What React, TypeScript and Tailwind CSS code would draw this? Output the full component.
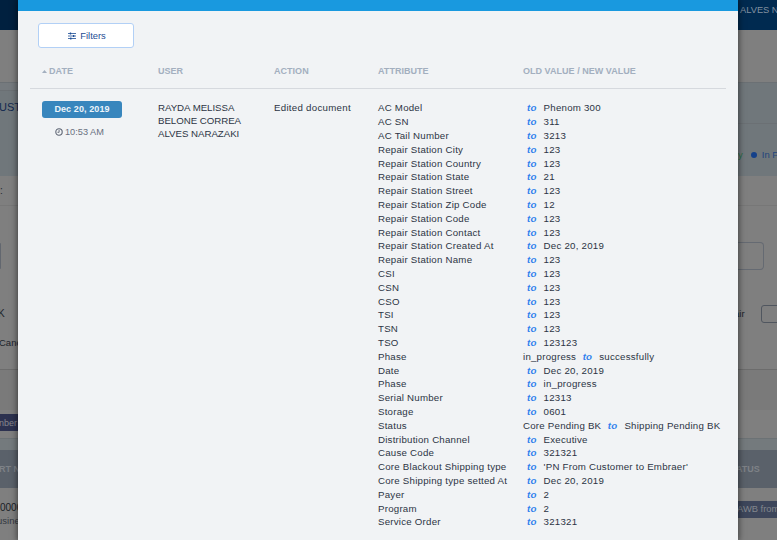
import React from "react";

const changes: [string, string, string][] = [
  ["AC Model", "", "Phenom 300"],
  ["AC SN", "", "311"],
  ["AC Tail Number", "", "3213"],
  ["Repair Station City", "", "123"],
  ["Repair Station Country", "", "123"],
  ["Repair Station State", "", "21"],
  ["Repair Station Street", "", "123"],
  ["Repair Station Zip Code", "", "12"],
  ["Repair Station Code", "", "123"],
  ["Repair Station Contact", "", "123"],
  ["Repair Station Created At", "", "Dec 20, 2019"],
  ["Repair Station Name", "", "123"],
  ["CSI", "", "123"],
  ["CSN", "", "123"],
  ["CSO", "", "123"],
  ["TSI", "", "123"],
  ["TSN", "", "123"],
  ["TSO", "", "123123"],
  ["Phase", "in_progress", "successfully"],
  ["Date", "", "Dec 20, 2019"],
  ["Phase", "", "in_progress"],
  ["Serial Number", "", "12313"],
  ["Storage", "", "0601"],
  ["Status", "Core Pending BK", "Shipping Pending BK"],
  ["Distribution Channel", "", "Executive"],
  ["Cause Code", "", "321321"],
  ["Core Blackout Shipping type", "", "'PN From Customer to Embraer'"],
  ["Core Shipping type setted At", "", "Dec 20, 2019"],
  ["Payer", "", "2"],
  ["Program", "", "2"],
  ["Service Order", "", "321321"],
];

function LeftBackdrop() {
  return (
    <div className="flex h-full w-[18px] shrink-0 flex-col overflow-hidden whitespace-nowrap bg-[#7f7f7f]">
      <div className="h-[30px] shrink-0 bg-[#00203f]" />
      <div className="h-[52px] shrink-0" />
      <div className="h-[9px] shrink-0 border-y border-[#6b7074] bg-[#757a7e]" />
      <div className="h-[85px] shrink-0 bg-[#70777b] pt-[9px] text-[11px] leading-[14px] text-[#12294f]">
        <span className="-ml-px">UST</span>
      </div>
      <div className="h-[30px] shrink-0 border-b border-[#777] pt-[9px] text-[10px] leading-3 text-[#22262d]">:</div>
      <div className="mt-[37px] h-[26px] w-px shrink-0 rounded-r bg-[#62676f]" />
      <div className="mt-[39px] h-3 shrink-0 text-[10px] leading-3 text-[#20242b]">
        <span className="-ml-[2px]">K</span>
      </div>
      <div className="mt-[17px] h-3 shrink-0 text-[9.5px] leading-3 text-[#20242b]">
        <span className="-ml-px">Canc</span>
      </div>
      <div className="mt-[20px] h-[41px] shrink-0 border-t border-[#6c6c6c] bg-[#7a7a7a]" />
      <div className="mt-[4px] h-[17px] shrink-0 bg-[#2d3250] text-[9px] leading-[18px] text-[#85868c]">
        <span className="-ml-px">nber</span>
      </div>
      <div className="mt-[7px] h-3 shrink-0 border-t border-[#6c7275] bg-[#747a7d]" />
      <div className="h-[38px] shrink-0 bg-[#5a616a] text-[9px] font-bold leading-[38px] text-[#7e8287]">
        <span className="-ml-px">RT N</span>
      </div>
      <div className="pt-[13px] text-[10px] leading-[13px] text-[#191d25]">
        <span>0000</span>
      </div>
      <div className="text-[9.5px] leading-[13px] text-[#343941]">
        <span className="-ml-[3px]">usine</span>
      </div>
    </div>
  );
}

function RightBackdrop() {
  return (
    <div className="flex h-full w-[39px] shrink-0 flex-col overflow-hidden whitespace-nowrap bg-[#7f7f7f]">
      <div className="h-[30px] shrink-0 bg-[#002a50] pl-[2px] text-[9.3px] leading-[20px] text-[#8291a0]">ALVES N</div>
      <div className="h-[52px] shrink-0" />
      <div className="h-[42px] shrink-0 border-y border-[#6b7074] bg-[#70777b]" />
      <div className="flex h-[52px] shrink-0 items-start bg-[#70777b] pt-[25px] text-[9.5px] leading-3">
        <span className="text-[#2c6d47]">y</span>
        <span className="ml-[8px] mt-[3px] size-[6px] shrink-0 rounded-full bg-[#15418a]" />
        <span className="ml-[5px] text-[#23457c]">In P</span>
      </div>
      <div className="h-[30px] shrink-0 border-b border-[#777]" />
      <div className="mt-[36px] h-[28px] w-[26px] shrink-0 rounded-r-[4px] border border-l-0 border-[#656a72]" />
      <div className="mt-[35px] flex h-[18px] shrink-0 items-center">
        <span className="-ml-[4px] w-[27px] shrink-0 text-[9.5px] text-[#20242b]">air</span>
        <span className="h-[18px] w-[30px] shrink-0 rounded-[3px] border border-[#50565f]" />
      </div>
      <div className="mt-[46px] h-[41px] shrink-0 border-t border-[#6c6c6c] bg-[#7a7a7a]" />
      <div className="mt-[28px] h-3 shrink-0 border-t border-[#6c7275] bg-[#747a7d]" />
      <div className="h-[38px] shrink-0 bg-[#5a616a] text-[9px] font-bold leading-[38px] text-[#7e8287]">
        <span className="-ml-[2px]">ATUS</span>
      </div>
      <div className="mt-[13px] h-[17px] shrink-0 bg-[#3d465b] text-[9.4px] leading-[16px] text-[#82868d]">
        <span className="-ml-px">AWB from</span>
      </div>
    </div>
  );
}

function SlidersIcon() {
  return (
    <svg viewBox="0 0 8 8" className="size-2" fill="none" stroke="#1c4c94" strokeWidth="1">
      <path d="M0 1.5h8M0 4h8M0 6.5h8" strokeWidth=".8" />
      <path d="M2.5 .4v2.2M5.6 2.9v2.2M2.8 5.4v2.2" strokeWidth="1.3" />
    </svg>
  );
}

function ClockIcon() {
  return (
    <svg viewBox="0 0 8 8" className="size-2 shrink-0" fill="none" stroke="#5e6574">
      <circle cx="4" cy="4" r="3.2" strokeWidth="1.1" />
      <path d="M4.1 1.9v2.4H2.5" strokeWidth=".9" />
    </svg>
  );
}

export default function App() {
  return (
    <div className="flex h-[540px] w-[777px] overflow-hidden font-['Liberation_Sans',Arial,sans-serif]">
      <LeftBackdrop />
      <main className="z-10 flex w-[720px] shrink-0 flex-col bg-[#f1f3f5] text-[9.7px] tracking-[.23px] text-[#2c3444] shadow-[0_0_6px_1px_rgba(0,0,0,0.5)]">
        <div className="h-[11px] shrink-0 bg-[#1999df]" />
        <div className="pl-5 pt-3">
          <button className="flex h-[25px] w-24 items-center justify-center gap-1 rounded-[3px] border border-[#b2d0f6] bg-white pt-px pl-[2px] text-[9.4px] tracking-normal text-[#1c4c94]">
            <SlidersIcon />
            <span>Filters</span>
          </button>
        </div>
        <header className="ml-3 mt-[17px] grid h-6 w-[696px] grid-cols-[116px_116px_104px_145px_203px] border-b border-[#d6d9de] pl-3 pt-[1px] text-[9px] font-bold leading-[11px] tracking-[.03px] text-[#a3afbf]">
          <span className="flex">
            <svg viewBox="0 0 5 3" className="mr-[2px] mt-1 h-[3px] w-[5px]">
              <path d="M0 3 2.5 0 5 3z" fill="#a3afbf" />
            </svg>
            DATE
          </span>
          <span>USER</span>
          <span>ACTION</span>
          <span>ATTRIBUTE</span>
          <span>OLD VALUE / NEW VALUE</span>
        </header>
        <section className="ml-6 mt-3 grid grid-cols-[116px_116px_104px_1fr]">
          <div className="w-20">
            <div className="h-[17px] rounded-[3px] bg-[#3886bd] text-center text-[9px] font-bold leading-[17px] tracking-[.1px] text-[#edf4fa]">Dec 20, 2019</div>
            <div className="mt-2 flex h-3 items-center pl-[13px] gap-[2px] text-[9.2px] leading-3 tracking-normal text-[#697080]">
              <ClockIcon />
              10:53 AM
            </div>
          </div>
          <div className="leading-[13px] tracking-[-.03px]">
            RAYDA MELISSA<br />BELONE CORREA<br />ALVES NARAZAKI
          </div>
          <div className="leading-[13.8px] tracking-[.28px]">Edited document</div>
          <div className="whitespace-nowrap pt-[.4px] leading-[13.8px]">
            {changes.map(([name, before, after], i) => (
              <div key={i} className="grid h-[13.8px] grid-cols-[145px_203px]">
                <span>{name}</span>
                <span className="flex">
                  {before && <span className="mr-[2.5px]">{before}</span>}
                  <b className="ml-1 mr-[7px] italic text-[#2f80ed]">to</b>
                  <span>{after}</span>
                </span>
              </div>
            ))}
          </div>
        </section>
      </main>
      <RightBackdrop />
    </div>
  );
}
